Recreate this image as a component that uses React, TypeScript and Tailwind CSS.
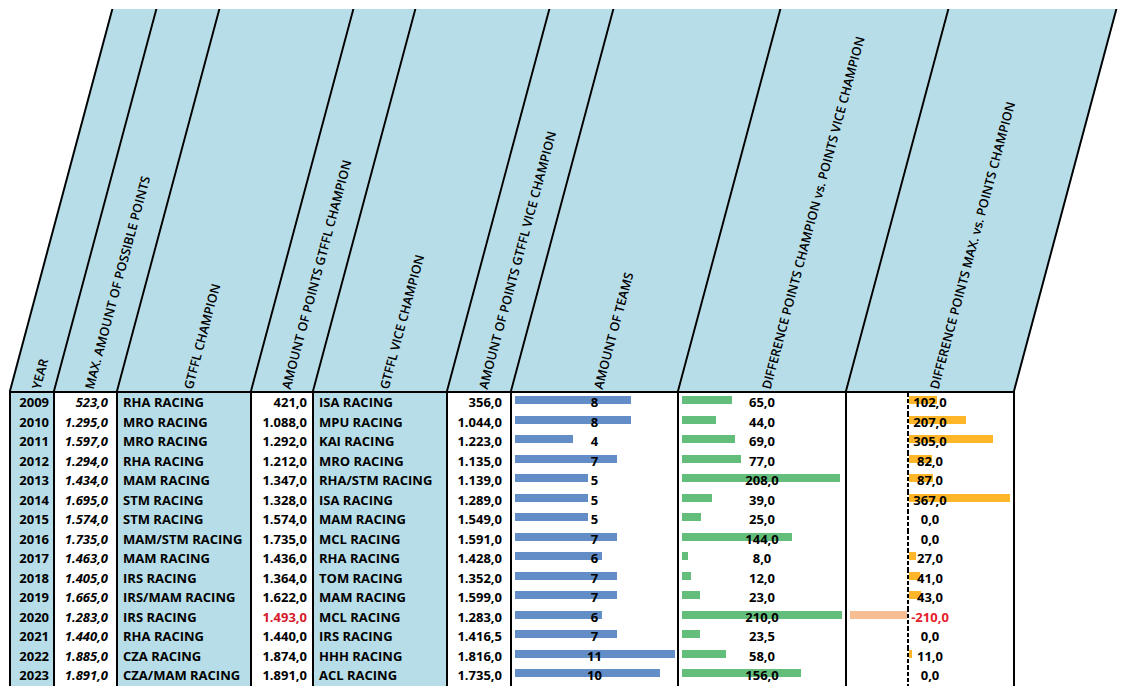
import React from 'react';

const font = "font-['Open_Sans','Liberation_Sans',sans-serif]";

const headers = [
    { label: 'YEAR', w: 'w-[44px]' },
    { label: 'MAX. AMOUNT OF POSSIBLE POINTS', w: 'w-[63px]' },
    { label: 'GTFFL CHAMPION', w: 'w-[134px]' },
    { label: 'AMOUNT OF POINTS GTFFL CHAMPION', w: 'w-[62px]' },
    { label: 'GTFFL VICE CHAMPION', w: 'w-[134px]' },
    { label: 'AMOUNT OF POINTS GTFFL VICE CHAMPION', w: 'w-[64px]' },
    { label: 'AMOUNT OF TEAMS', w: 'w-[167px]' },
    { label: 'DIFFERENCE POINTS CHAMPION vs. POINTS VICE CHAMPION', w: 'w-[168px]' },
    { label: 'DIFFERENCE POINTS MAX. vs. POINTS CHAMPION', w: 'w-[170px] border-r-2' },
];

type Row = {
    year: string;
    max: string;
    champ: string;
    champPts: string;
    vice: string;
    vicePts: string;
    teams: number;
    diff: number;
    diffMax: number;
    redPts?: boolean;
};

const rows: Row[] = [
    { year: '2009', max: '523,0', champ: 'RHA RACING', champPts: '421,0', vice: 'ISA RACING', vicePts: '356,0', teams: 8, diff: 65, diffMax: 102 },
    { year: '2010', max: '1.295,0', champ: 'MRO RACING', champPts: '1.088,0', vice: 'MPU RACING', vicePts: '1.044,0', teams: 8, diff: 44, diffMax: 207 },
    { year: '2011', max: '1.597,0', champ: 'MRO RACING', champPts: '1.292,0', vice: 'KAI RACING', vicePts: '1.223,0', teams: 4, diff: 69, diffMax: 305 },
    { year: '2012', max: '1.294,0', champ: 'RHA RACING', champPts: '1.212,0', vice: 'MRO RACING', vicePts: '1.135,0', teams: 7, diff: 77, diffMax: 82 },
    { year: '2013', max: '1.434,0', champ: 'MAM RACING', champPts: '1.347,0', vice: 'RHA/STM RACING', vicePts: '1.139,0', teams: 5, diff: 208, diffMax: 87 },
    { year: '2014', max: '1.695,0', champ: 'STM RACING', champPts: '1.328,0', vice: 'ISA RACING', vicePts: '1.289,0', teams: 5, diff: 39, diffMax: 367 },
    { year: '2015', max: '1.574,0', champ: 'STM RACING', champPts: '1.574,0', vice: 'MAM RACING', vicePts: '1.549,0', teams: 5, diff: 25, diffMax: 0 },
    { year: '2016', max: '1.735,0', champ: 'MAM/STM RACING', champPts: '1.735,0', vice: 'MCL RACING', vicePts: '1.591,0', teams: 7, diff: 144, diffMax: 0 },
    { year: '2017', max: '1.463,0', champ: 'MAM RACING', champPts: '1.436,0', vice: 'RHA RACING', vicePts: '1.428,0', teams: 6, diff: 8, diffMax: 27 },
    { year: '2018', max: '1.405,0', champ: 'IRS RACING', champPts: '1.364,0', vice: 'TOM RACING', vicePts: '1.352,0', teams: 7, diff: 12, diffMax: 41 },
    { year: '2019', max: '1.665,0', champ: 'IRS/MAM RACING', champPts: '1.622,0', vice: 'MAM RACING', vicePts: '1.599,0', teams: 7, diff: 23, diffMax: 43 },
    { year: '2020', max: '1.283,0', champ: 'IRS RACING', champPts: '1.493,0', vice: 'MCL RACING', vicePts: '1.283,0', teams: 6, diff: 210, diffMax: -210, redPts: true },
    { year: '2021', max: '1.440,0', champ: 'RHA RACING', champPts: '1.440,0', vice: 'IRS RACING', vicePts: '1.416,5', teams: 7, diff: 23.5, diffMax: 0 },
    { year: '2022', max: '1.885,0', champ: 'CZA RACING', champPts: '1.874,0', vice: 'HHH RACING', vicePts: '1.816,0', teams: 11, diff: 58, diffMax: 11 },
    { year: '2023', max: '1.891,0', champ: 'CZA/MAM RACING', champPts: '1.891,0', vice: 'ACL RACING', vicePts: '1.735,0', teams: 10, diff: 156, diffMax: 0 },
];

const fmt = (n: number) => n.toFixed(1).replace('.', ',');

const cell = 'border-r-2 border-black leading-[19.5px] whitespace-nowrap';

function DataRow({ r }: { r: Row }) {
    return (
        <div className="grid grid-cols-[44px_63px_134px_62px_134px_64px_167px_168px_168px] h-[19.5px] border-b-2 border-black">
            <div className={`${cell} bg-[#B7DEE8] text-right pr-[4px]`}>{r.year}</div>
            <div className={`${cell} bg-white text-right pr-[8px] italic`}>{r.max}</div>
            <div className={`${cell} bg-[#B7DEE8] pl-[5px]`}>{r.champ}</div>
            <div className={`${cell} bg-white text-right pr-[5px] ${r.redPts ? 'text-[#D7192A]' : ''}`}>{r.champPts}</div>
            <div className={`${cell} bg-[#B7DEE8] pl-[5px]`}>{r.vice}</div>
            <div className={`${cell} bg-white text-right pr-[8px]`}>{r.vicePts}</div>

            {/* amount of teams: blue data bar */}
            <div className={`${cell} bg-white relative text-center`}>
                <div className="absolute left-[3px] top-[3px] h-[8px] bg-[#628DC7]" style={{ width: (r.teams / 11) * 160 }} />
                <span className="relative">{r.teams}</span>
            </div>

            {/* champion vs vice: green data bar */}
            <div className={`${cell} bg-white relative text-center`}>
                <div className="absolute left-[3px] top-[3px] h-[8px] bg-[#63BE7B]" style={{ width: r.diff * 0.762 }} />
                <span className="relative">{fmt(r.diff)}</span>
            </div>

            {/* max vs champion: axis with orange bars */}
            <div className={`${cell} bg-white relative text-center`}>
                {r.diffMax > 0 && (
                    <div className="absolute left-[62px] top-[3px] h-[8px] bg-[#FFB628]" style={{ width: r.diffMax * 0.275 }} />
                )}
                {r.diffMax < 0 && (
                    <div className="absolute top-[3px] h-[8px] bg-[#F6BE92]" style={{ left: 60 - -r.diffMax * 0.271, width: -r.diffMax * 0.271 }} />
                )}
                <div className="absolute left-[60px] top-0 bottom-0 w-[2px] bg-[repeating-linear-gradient(to_bottom,#000_0_4px,transparent_4px_6px)]" />
                <span className={`relative ${r.diffMax < 0 ? 'text-[#E5202B]' : ''}`}>{fmt(r.diffMax)}</span>
            </div>
        </div>
    );
}

export default function App() {
    return (
        <div className={`w-[1125px] h-[695px] bg-white pt-[9px] pl-[9px] text-black ${font}`}>
            {/* slanted header */}
            <div className="flex h-[382px]">
                {headers.map((h) => (
                    <div
                        key={h.label}
                        className={`${h.w} h-full shrink-0 -skew-x-[15deg] origin-bottom-left bg-[#B7DEE8] border-l-2 border-black flex items-end justify-center pl-[7px] pb-[2px]`}
                    >
                        <div className="w-0 h-0 flex items-center">
                            <span className="whitespace-nowrap text-[12.6px] font-semibold leading-[18px] origin-left [transform:skewX(15deg)_rotate(-75deg)]">
                                {h.label}
                            </span>
                        </div>
                    </div>
                ))}
            </div>

            {/* table body */}
            <div className="w-[1006px] border-l-2 border-t-2 border-black text-[13px] font-bold">
                {rows.map((r) => (
                    <DataRow key={r.year} r={r} />
                ))}
            </div>
        </div>
    );
}
